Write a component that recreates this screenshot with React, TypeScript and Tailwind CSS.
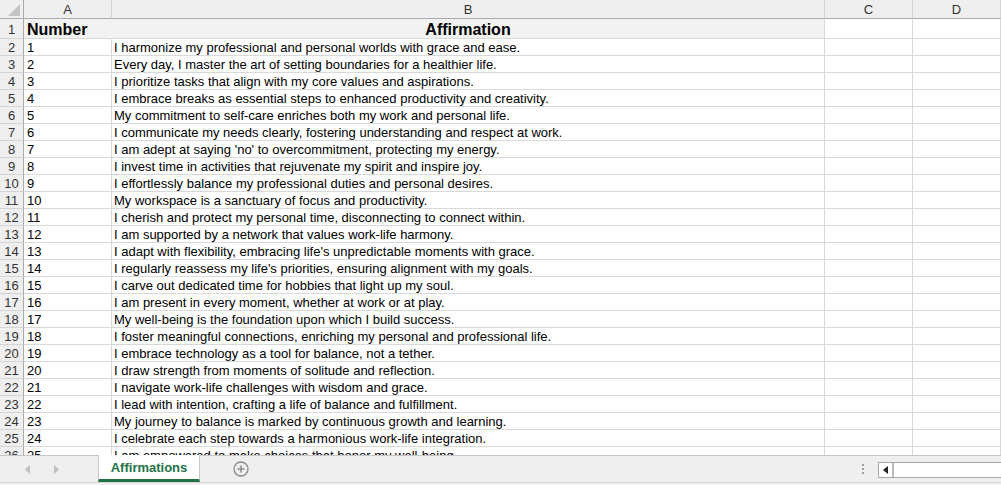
import React from "react";

const rows: string[] = [
  "I harmonize my professional and personal worlds with grace and ease.",
  "Every day, I master the art of setting boundaries for a healthier life.",
  "I prioritize tasks that align with my core values and aspirations.",
  "I embrace breaks as essential steps to enhanced productivity and creativity.",
  "My commitment to self-care enriches both my work and personal life.",
  "I communicate my needs clearly, fostering understanding and respect at work.",
  "I am adept at saying 'no' to overcommitment, protecting my energy.",
  "I invest time in activities that rejuvenate my spirit and inspire joy.",
  "I effortlessly balance my professional duties and personal desires.",
  "My workspace is a sanctuary of focus and productivity.",
  "I cherish and protect my personal time, disconnecting to connect within.",
  "I am supported by a network that values work-life harmony.",
  "I adapt with flexibility, embracing life's unpredictable moments with grace.",
  "I regularly reassess my life's priorities, ensuring alignment with my goals.",
  "I carve out dedicated time for hobbies that light up my soul.",
  "I am present in every moment, whether at work or at play.",
  "My well-being is the foundation upon which I build success.",
  "I foster meaningful connections, enriching my personal and professional life.",
  "I embrace technology as a tool for balance, not a tether.",
  "I draw strength from moments of solitude and reflection.",
  "I navigate work-life challenges with wisdom and grace.",
  "I lead with intention, crafting a life of balance and fulfillment.",
  "My journey to balance is marked by continuous growth and learning.",
  "I celebrate each step towards a harmonious work-life integration.",
  "I am empowered to make choices that honor my well-being.",
];

const head = "box-border flex items-center justify-center pt-px bg-[#efefef] border-r border-b border-r-[#d4d4d4] border-b-[#ababab] text-[13px] text-[#333]";
const rowHead = "box-border flex items-center justify-center pt-[2px] bg-[#efefef] border-r border-b border-r-[#ababab] border-b-[#d4d4d4] text-[13px] text-[#333]";
const cell = "box-border flex items-center pt-[2px] border-r border-b border-[#d9d9d9] text-[13px] text-black whitespace-nowrap overflow-hidden";

export default function App() {
  return (
    <div className="w-[1001px] h-[485px] overflow-hidden bg-white flex flex-col font-['Liberation_Sans',Arial,sans-serif]">
      <div className="h-[455px] overflow-hidden">
        <div className="grid grid-cols-[24px_88px_713px_88px_1fr] auto-rows-[17px] grid-rows-[19px_20px]">
          {/* column headers */}
          <div className="box-border bg-[#efefef] border-r border-b border-r-[#ababab] border-b-[#ababab] flex items-end justify-end pr-[3px] pb-[2px]">
            <svg width="12" height="12" viewBox="0 0 12 12">
              <polygon points="12,0 12,12 0,12" fill="#c4c4c4" />
            </svg>
          </div>
          <div className={head}>A</div>
          <div className={head}>B</div>
          <div className={head}>C</div>
          <div className={head}>D</div>

          {/* row 1 */}
          <div className={rowHead}>1</div>
          <div className="box-border flex items-center pt-[2px] bg-[#f2f2f2] border-b border-r border-b-[#d9d9d9] border-r-[#f2f2f2] pl-[3px] text-[16px] font-bold text-black">Number</div>
          <div className="box-border flex items-center justify-center pt-[2px] bg-[#f2f2f2] border-b border-r border-[#d9d9d9] text-[16px] font-bold text-black">Affirmation</div>
          <div className={cell}></div>
          <div className={cell}></div>

          {rows.map((text, i) => (
            <React.Fragment key={i}>
              <div className={rowHead}>{i + 2}</div>
              <div className={`${cell} pl-[3px]`}>{i + 1}</div>
              <div className={`${cell} pl-[2px]`}>{text}</div>
              <div className={cell}></div>
              <div className={cell}></div>
            </React.Fragment>
          ))}
        </div>
      </div>

      {/* sheet tab bar */}
      <div className="h-[30px] box-border bg-[#efefef] border-t border-[#c6c6c6] flex items-start relative">
        <div className="w-[98px] h-[26px] flex items-center">
          <svg width="6" height="9" viewBox="0 0 6 9" className="ml-[25px]">
            <polygon points="5,0 5,9 0,4.5" fill="#c0c0c0" />
          </svg>
          <svg width="6" height="9" viewBox="0 0 6 9" className="ml-[22px]">
            <polygon points="1,0 1,9 6,4.5" fill="#c0c0c0" />
          </svg>
        </div>
        <div className="-mt-px w-[102px] h-[27px] box-border pt-[2px] bg-white border-x border-[#c6c6c6] border-b-[3px] border-b-[#217346] flex items-center justify-center text-[13px] font-bold text-[#217346]">
          Affirmations
        </div>
        <div className="ml-[33px] h-[26px] flex items-center">
          <svg width="16" height="16" viewBox="0 0 16 16">
            <circle cx="8" cy="8" r="7" fill="none" stroke="#8a8a8a" strokeWidth="1.3" />
            <line x1="8" y1="4.5" x2="8" y2="11.5" stroke="#8a8a8a" strokeWidth="1.5" />
            <line x1="4.5" y1="8" x2="11.5" y2="8" stroke="#8a8a8a" strokeWidth="1.5" />
          </svg>
        </div>
        <div className="flex-1" />
        <div className="h-[26px] flex items-center mr-[14px]">
          <div className="flex flex-col gap-[2px]">
            <span className="w-[2px] h-[2px] bg-[#a0a0a0]" />
            <span className="w-[2px] h-[2px] bg-[#a0a0a0]" />
            <span className="w-[2px] h-[2px] bg-[#a0a0a0]" />
          </div>
        </div>
        <div className="mt-[6px] w-[123px] h-[16px] box-border border border-[#a6a6a6] border-r-0 bg-white flex">
          <div className="w-[15px] h-full box-border border-r-2 border-[#bcbcbc] flex items-center justify-center">
            <svg width="5" height="8" viewBox="0 0 5 8">
              <polygon points="5,0 5,8 0,4" fill="#222" />
            </svg>
          </div>
        </div>
        <div className="absolute left-0 right-0 bottom-[2px] h-px bg-[#d6d6d6]" />
      </div>
    </div>
  );
}
